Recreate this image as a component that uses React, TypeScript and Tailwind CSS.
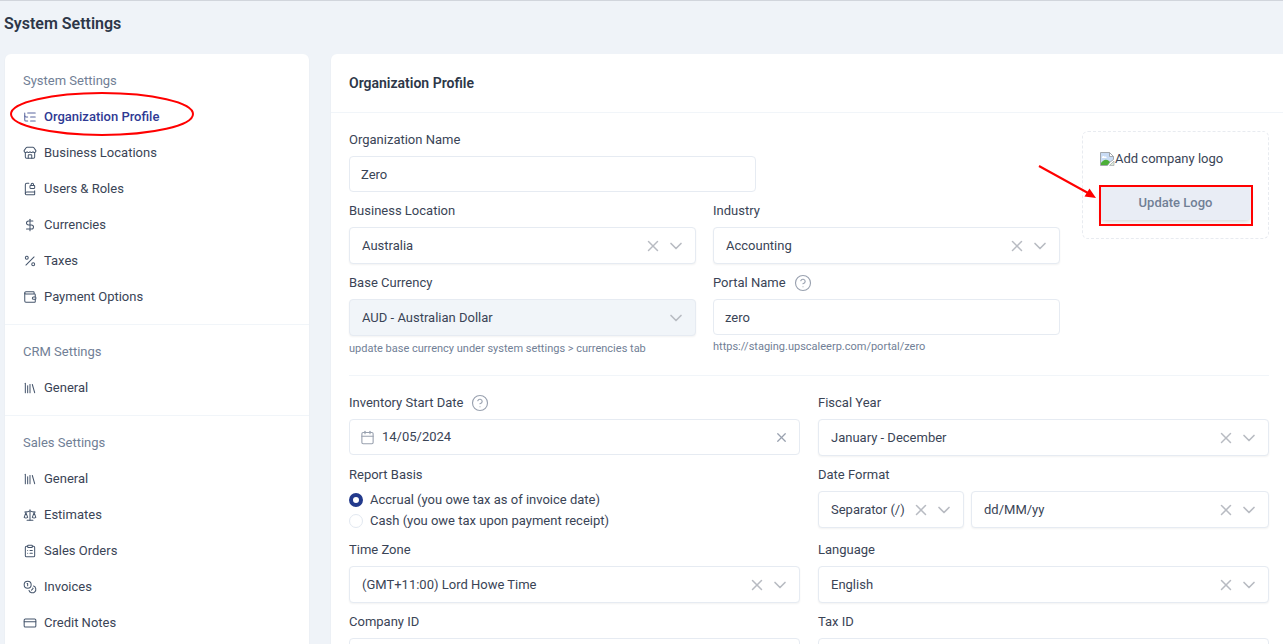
import { useId, type ReactNode } from "react";
import {
  BookLock,
  Calendar,
  ChevronDown,
  CircleHelp,
  ClipboardList,
  Coins,
  CreditCard,
  DollarSign,
  Library,
  ListTree,
  Percent,
  Scale,
  Store,
  Wallet,
  X,
  type LucideIcon,
} from "lucide-react";

type Item = { label: string; icon: LucideIcon; active?: boolean };
type Group = { title: string; items: Item[] };

const groups: Group[] = [
  {
    title: "System Settings",
    items: [
      { label: "Organization Profile", icon: ListTree, active: true },
      { label: "Business Locations", icon: Store },
      { label: "Users & Roles", icon: BookLock },
      { label: "Currencies", icon: DollarSign },
      { label: "Taxes", icon: Percent },
      { label: "Payment Options", icon: Wallet },
    ],
  },
  { title: "CRM Settings", items: [{ label: "General", icon: Library }] },
  {
    title: "Sales Settings",
    items: [
      { label: "General", icon: Library },
      { label: "Estimates", icon: Scale },
      { label: "Sales Orders", icon: ClipboardList },
      { label: "Invoices", icon: Coins },
      { label: "Credit Notes", icon: CreditCard },
    ],
  },
];

function Sidebar() {
  return (
    <nav className="w-[304px] shrink-0 rounded-md bg-white shadow-xs">
      {groups.map((group) => (
        <section key={group.title} className="border-b border-slate-100 py-[9px] last:border-b-0">
          <h2 className="flex h-9 items-center px-[18px] text-[#718096]">{group.title}</h2>
          <ul>
            {group.items.map((item) => (
              <li key={item.label} className="relative">
                <a
                  href="#"
                  className={
                    item.active
                      ? "flex h-9 items-center gap-[7px] px-[18px] font-medium text-[#2f3a94]"
                      : "flex h-9 items-center gap-[7px] px-[18px] text-[#3a4456]"
                  }
                >
                  <item.icon size={14} strokeWidth={1.75} className={item.active ? "text-[#5b679f]" : "text-slate-600"} />
                  {item.label}
                </a>
                {item.active && (
                  <svg className="pointer-events-none absolute -top-2 left-[5px]" width="186" height="46" fill="none">
                    <ellipse cx="92" cy="23" rx="91" ry="21" stroke="#ff0000" strokeWidth="2" />
                  </svg>
                )}
              </li>
            ))}
          </ul>
        </section>
      ))}
    </nav>
  );
}

function Label({ htmlFor, children, help }: { htmlFor: string; children: ReactNode; help?: boolean }) {
  return (
    <div className="flex h-[18px] items-center gap-2">
      <label htmlFor={htmlFor}>{children}</label>
      {help && <CircleHelp size={18} strokeWidth={1.5} className="text-gray-400" />}
    </div>
  );
}

function ClearButton({ name }: { name: string }) {
  return (
    <button type="button" aria-label={`Clear ${name}`} className="shrink-0 text-[#b8bbc2]">
      <X size={18} strokeWidth={2} />
    </button>
  );
}

function Select({ id, name, value, disabled }: { id: string; name: string; value: string; disabled?: boolean }) {
  return (
    <div
      className={
        disabled
          ? "flex h-[37px] items-center gap-1 rounded border border-[#e6ebf2] bg-slate-100 pr-[9px] pl-3 shadow-xs"
          : "flex h-[37px] items-center gap-1 rounded border border-[#e6ebf2] bg-white pr-[9px] pl-3 shadow-xs"
      }
    >
      <select id={id} aria-label={name} disabled={disabled} className="min-w-0 flex-1 appearance-none bg-transparent outline-none">
        <option>{value}</option>
      </select>
      {!disabled && <ClearButton name={name} />}
      <ChevronDown size={20} strokeWidth={2} className="shrink-0 text-[#b8bbc2]" />
    </div>
  );
}

function SelectField({ label, value, disabled, hint }: { label: string; value: string; disabled?: boolean; hint?: string }) {
  const id = useId();
  return (
    <div>
      <Label htmlFor={id}>{label}</Label>
      <div className="mt-[7px]">
        <Select id={id} name={label} value={value} disabled={disabled} />
      </div>
      {hint && <p className="mt-[5px] text-[11px] leading-4 text-[#718096]">{hint}</p>}
    </div>
  );
}

function TextField({ label, value, help, hint }: { label: string; value: string; help?: boolean; hint?: string }) {
  const id = useId();
  return (
    <div>
      <Label htmlFor={id} help={help}>
        {label}
      </Label>
      <input
        id={id}
        defaultValue={value}
        className="mt-[7px] block h-9 w-full rounded border border-[#e6ebf2] bg-white px-[11px] outline-none"
      />
      {hint && <p className="mt-1 text-[11px] leading-4 text-[#718096]">{hint}</p>}
    </div>
  );
}

function DateField() {
  const id = useId();
  return (
    <div>
      <Label htmlFor={id} help>
        Inventory Start Date
      </Label>
      <div className="mt-[7px] flex h-9 items-center gap-[7px] rounded border border-[#e6ebf2] bg-white px-[10px]">
        <Calendar size={15} strokeWidth={1.75} className="shrink-0 text-gray-400" />
        <input id={id} defaultValue="14/05/2024" className="min-w-0 flex-1 bg-transparent outline-none" />
        <button type="button" aria-label="Clear date" className="text-gray-400">
          <X size={15} strokeWidth={2} />
        </button>
      </div>
    </div>
  );
}

function RadioRow({ label, checked }: { label: string; checked?: boolean }) {
  return (
    <label className="flex h-[21px] items-center gap-[7px]">
      <input
        type="radio"
        name="basis"
        defaultChecked={checked}
        className="size-[14px] appearance-none rounded-full border border-slate-200 bg-white checked:border-4 checked:border-[#233a8c]"
      />
      {label}
    </label>
  );
}

function DateFormat() {
  const id = useId();
  return (
    <div>
      <Label htmlFor={id}>Date Format</Label>
      <div className="mt-[7px] flex gap-[7px]">
        <div className="w-[146px] shrink-0">
          <Select id={id} name="Date separator" value="Separator (/)" />
        </div>
        <div className="min-w-0 flex-1">
          <Select id={`${id}-pattern`} name="Date pattern" value="dd/MM/yy" />
        </div>
      </div>
    </div>
  );
}

function MissingImage() {
  return (
    <svg width="15" height="16" viewBox="0 0 15 16" className="shrink-0" aria-hidden="true">
      <path d="M.5 1.5h9l4 4v3l-4 3-2 3h-7z" fill="#c9dcf5" stroke="#a3a8ad" />
      <path d="M9.5 1.5v4h4z" fill="#fff" stroke="#a3a8ad" />
      <path d="M2 6.5c0-1.5 2-2 2.500-.8C6 5 7 6 6.500 7H2z" fill="#fff" />
      <path d="M1 12c2-3 5-4.500 8-2l1 1-2.500 3H1z" fill="#4caf38" />
      <path d="M14 10v4.500H9.500z" fill="#dcebd8" stroke="#a3a8ad" strokeWidth=".7" />
    </svg>
  );
}

function LogoCard() {
  return (
    <div className="relative w-[187px] shrink-0 self-start rounded-md border border-dashed border-[#e8ebf0] p-[17px]">
      <div className="flex h-5 items-center">
        <MissingImage />
        <span>Add company logo</span>
      </div>
      <div className="relative mt-[17px] mb-px">
        <button type="button" className="block h-[34px] w-full rounded bg-[#e9edf5] font-medium text-[#718096] shadow-md">
          Update Logo
        </button>
        <div className="pointer-events-none absolute -top-px -right-0.5 -bottom-[6px] -left-px border-2 border-[#ff0000]" />
      </div>
      <svg className="pointer-events-none absolute top-[31px] -left-[46px]" width="62" height="38" fill="none">
        <path d="M2 3 51 30" stroke="#ff0000" strokeWidth="2" />
        <path d="M59 35 47.500 33.500l5-8z" fill="#ff0000" />
      </svg>
    </div>
  );
}

function Profile() {
  return (
    <main className="min-w-0 flex-1 rounded-l-md bg-white shadow-xs">
      <header className="flex h-[59px] items-center border-b border-slate-100 px-[18px]">
        <h2 className="text-sm font-semibold text-[#2d3748]">Organization Profile</h2>
      </header>
      <form className="pt-[18px] pr-[14px] pb-6 pl-[18px]">
        <div className="flex gap-[22px] border-b border-slate-100 pb-[18px]">
          <div className="grid flex-1 grid-cols-2 gap-x-[17px] gap-y-[10px]">
            <div className="col-span-2 w-[407px]">
              <TextField label="Organization Name" value="Zero" />
            </div>
            <SelectField label="Business Location" value="Australia" />
            <SelectField label="Industry" value="Accounting" />
            <SelectField
              label="Base Currency"
              value="AUD - Australian Dollar"
              disabled
              hint="update base currency under system settings > currencies tab"
            />
            <TextField label="Portal Name" value="zero" help hint="https://staging.upscaleerp.com/portal/zero" />
          </div>
          <LogoCard />
        </div>
        <div className="grid grid-cols-2 gap-x-[18px] gap-y-[10px] pt-[18px]">
          <DateField />
          <SelectField label="Fiscal Year" value="January - December" />
          <fieldset>
            <legend className="h-[18px] leading-[18px]">Report Basis</legend>
            <div className="pt-[5px]">
              <RadioRow label="Accrual (you owe tax as of invoice date)" checked />
              <RadioRow label="Cash (you owe tax upon payment receipt)" />
            </div>
          </fieldset>
          <DateFormat />
          <SelectField label="Time Zone" value="(GMT+11:00) Lord Howe Time" />
          <SelectField label="Language" value="English" />
          <TextField label="Company ID" value="" />
          <TextField label="Tax ID" value="" />
        </div>
      </form>
    </main>
  );
}

export default function App() {
  return (
    <div className="h-screen overflow-y-auto border-t border-gray-300 bg-[#eff3f8] font-[Roboto,sans-serif] text-[13px] leading-[18px] text-[#3a4456] [scrollbar-width:none]">
      <h1 className="flex h-[53px] items-center px-1 pb-[7px] text-base font-semibold text-[#2d3748]">System Settings</h1>
      <div className="flex gap-[22px] pl-[5px]">
        <Sidebar />
        <Profile />
      </div>
    </div>
  );
}
